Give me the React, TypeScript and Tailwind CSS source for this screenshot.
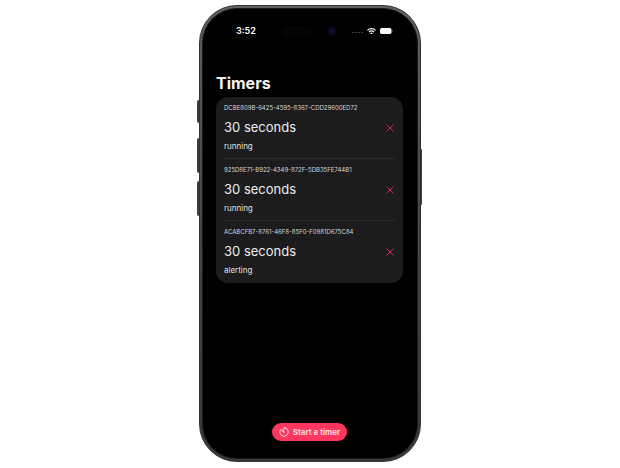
import { useState } from "react";

type Timer = {
  id: string;
  label: string;
  status: "running" | "alerting";
};

const initialTimers: Timer[] = [
  {
    id: "DCBE809B-6425-4595-8367-CDD29600ED72",
    label: "30 seconds",
    status: "running",
  },
  {
    id: "925D8E71-B922-4349-872F-5DB35FE744B1",
    label: "30 seconds",
    status: "running",
  },
  {
    id: "ACABCFB7-8761-46F8-85F0-F0981D675C84",
    label: "30 seconds",
    status: "alerting",
  },
];

const TimerIcon = () => (
  <svg
    viewBox="0 0 20 20"
    className="size-[10px]"
    fill="none"
    stroke="currentColor"
    strokeWidth="1.9"
    strokeLinecap="round"
    aria-hidden="true"
  >
    <path d="M10 4.8V1.5a8.5 8.5 0 1 1-6.2 2.7" />
    <path d="M6.6 6.6l3.9 3.9" strokeWidth="2.6" />
  </svg>
);

const StatusBar = () => (
  <header className="flex h-9 items-center pt-2 pr-6 pl-[33px]">
    <time className="w-[46px] text-[9px] leading-3 font-semibold">3:52</time>
    <span className="h-[10px] w-8 rounded-full bg-[#040405]" />
    <span className="ml-[14px] flex size-2 items-center justify-center rounded-full bg-[#08071c]">
      <span className="size-1 rounded-full bg-[#14123f]" />
    </span>
    <div className="ml-auto flex items-center gap-1">
      <svg viewBox="0 0 11 2" className="mt-1 w-[11px] fill-[#3c3c3c]">
        <rect x="0" y="0" width="2" height="1" />
        <rect x="3" y="0" width="2" height="1" />
        <rect x="6" y="0" width="2" height="1" />
        <rect x="9" y="0" width="2" height="1" />
      </svg>
      <svg
        viewBox="0 0 16 12"
        className="w-[9px]"
        fill="none"
        stroke="white"
        strokeWidth="2.2"
      >
        <path d="M.8 4.2a10.2 10.2 0 0 1 14.4 0" />
        <path d="M3.6 7.1a6.2 6.2 0 0 1 8.8 0" />
        <path d="M8 11.6L5.6 9.2a3.4 3.4 0 0 1 4.8 0z" fill="white" stroke="none" />
      </svg>
      <svg viewBox="0 0 13 6" className="w-[13px]">
        <rect width="11.5" height="6" rx="1.8" fill="white" />
        <path d="M12.2 2v2c.9-.3.9-1.7 0-2z" fill="#777" />
      </svg>
    </div>
  </header>
);

const TimerRow = ({
  timer,
  onRemove,
}: {
  timer: Timer;
  onRemove: (id: string) => void;
}) => (
  <li className="flex items-center justify-between border-b border-[#2c2c2e] pt-[7px] pb-[6px] last:border-transparent">
    <div>
      <p className="text-[6px] leading-[8px] whitespace-nowrap text-[#d4d4d6]">
        {timer.id}
      </p>
      <h2 className="mt-1 text-[13px] leading-[22px] text-[#ececee]">
        {timer.label}
      </h2>
      <p className="mt-[2px] text-[8px] leading-[12px] text-[#e0e0e2]">
        {timer.status}
      </p>
    </div>
    <button
      type="button"
      aria-label="Remove timer"
      onClick={() => onRemove(timer.id)}
      className="pr-px text-[#d42d50]"
    >
      <svg
        viewBox="0 0 8 8"
        className="size-2"
        fill="none"
        stroke="currentColor"
        strokeLinecap="round"
      >
        <path d="M.8.8l6.4 6.4M7.2.8L.8 7.2" />
      </svg>
    </button>
  </li>
);

const App = () => {
  const [timers, setTimers] = useState<Timer[]>(initialTimers);

  const handleRemove = (id: string) => {
    setTimers(timers.filter((timer) => timer.id !== id));
  };

  const handleStart = () => {
    setTimers([
      ...timers,
      {
        id: crypto.randomUUID().toUpperCase(),
        label: "30 seconds",
        status: "running",
      },
    ]);
  };

  return (
    <div className="flex min-h-screen justify-center bg-white pt-[5px] pb-[6px] font-['Inter','Liberation_Sans',sans-serif]">
      <div className="relative flex w-[222px] rounded-[38px] border border-[#303132] bg-linear-to-b from-[#5e6160] via-[#444546] to-[#38393a] p-[2px]">
        {/* side buttons */}
        <span className="absolute top-[94px] -left-[3px] h-[23px] w-[2px] rounded-l-sm bg-[#3a3c3d]" />
        <span className="absolute top-[132px] -left-[3px] h-[35px] w-[2px] rounded-l-sm bg-[#3a3c3d]" />
        <span className="absolute top-[175px] -left-[3px] h-[35px] w-[2px] rounded-l-sm bg-[#3a3c3d]" />
        <span className="absolute top-[143px] -right-[2px] h-[56px] w-px rounded-r-sm bg-[#3a3c3d]" />

        <main className="flex flex-1 flex-col rounded-[35px] border border-[#1b1b1c] bg-black text-white">
          <StatusBar />
          <div className="flex flex-1 flex-col pr-[14px] pb-[17px] pl-[13px]">
            <h1 className="mt-[26px] mb-[2px] text-[16px] leading-6 font-bold text-[#f4f4f4]">
              Timers
            </h1>
            <ul className="rounded-xl bg-[#1c1c1e] px-2">
              {timers.map((timer) => (
                <TimerRow
                  key={timer.id}
                  timer={timer}
                  onRemove={handleRemove}
                />
              ))}
            </ul>
            <button
              type="button"
              onClick={handleStart}
              className="mt-auto flex items-center gap-1 self-center rounded-full bg-[#ff375f] px-[7px] py-[3px] text-[8px] leading-3 font-semibold text-[#ffe4ea]"
            >
              <TimerIcon />
              Start a timer
            </button>
          </div>
        </main>
      </div>
    </div>
  );
};

export default App;
